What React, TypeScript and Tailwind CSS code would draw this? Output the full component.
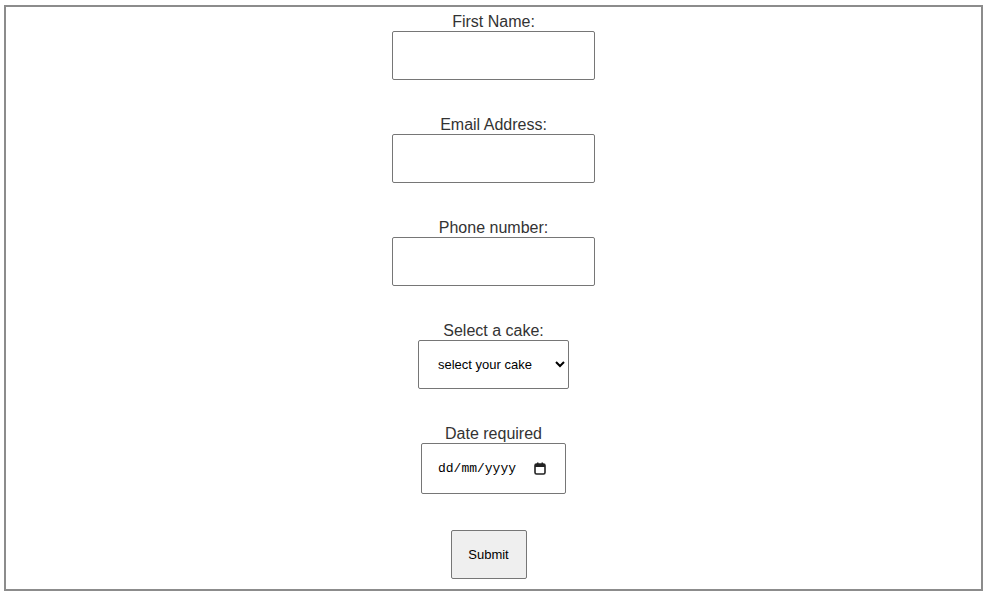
import React from 'react';

const labelCls = "block text-center text-[16px] leading-[19px] text-[#333]";
const boxCls = "block h-[49px] w-[203px] border border-[#767676] rounded-[2px] bg-white px-2 text-[13px] outline-none";

export default function App() {
    return (
        <div className="bg-white w-[989px] h-[595px] pt-[5px] pl-[4px]" style={{ fontFamily: '"Liberation Sans", Arial, sans-serif' }}>
            <form
                className="w-[979px] h-[586px] border-2 border-[#8c8c8c] flex flex-col items-center pt-[5px]"
                onSubmit={(e) => e.preventDefault()}
            >
                {/* First name */}
                <label className={labelCls}>First Name:</label>
                <input type="text" className={boxCls} />

                {/* Email */}
                <label className={labelCls + " mt-[35px]"}>Email Address:</label>
                <input type="email" className={boxCls} />

                {/* Phone */}
                <label className={labelCls + " mt-[35px]"}>Phone number:</label>
                <input type="tel" className={boxCls} />

                {/* Cake */}
                <label className={labelCls + " mt-[35px]"}>Select a cake:</label>
                <select
                    defaultValue=""
                    className="block h-[49px] w-[151px] border border-[#767676] rounded-[2px] bg-white pl-[15px] pr-1 text-[13px] text-black"
                    style={{ fontFamily: '"Liberation Sans", Arial, sans-serif' }}
                >
                    <option value="">select your cake</option>
                    <option value="chocolate">Chocolate</option>
                    <option value="vanilla">Vanilla</option>
                </select>

                {/* Date */}
                <label className={labelCls + " mt-[35px]"}>Date required</label>
                <div className="flex items-center h-[51px] w-[145px] border border-[#767676] rounded-[2px] bg-white pl-[16px] pr-[19px]">
                    <input
                        type="text"
                        placeholder="dd/mm/yyyy"
                        className="w-[88px] text-[13px] text-black placeholder:text-black outline-none bg-transparent"
                        style={{ fontFamily: '"Liberation Mono", "DejaVu Sans Mono", monospace' }}
                    />
                    <svg className="ml-auto" width="12" height="13" viewBox="0 0 12 13" fill="none">
                        <rect x="1" y="2" width="10" height="10" rx="1.5" stroke="#222" strokeWidth="1.6" />
                        <rect x="1" y="2" width="10" height="3" fill="#222" />
                        <rect x="3" y="0.5" width="1.5" height="2.5" fill="#222" />
                        <rect x="7.5" y="0.5" width="1.5" height="2.5" fill="#222" />
                    </svg>
                </div>

                <button
                    type="submit"
                    className="mt-[36px] mr-[10px] h-[49px] w-[76px] bg-[#efefef] border border-[#767676] rounded-[2px] text-[13px] text-black"
                >
                    Submit
                </button>
            </form>
        </div>
    );
}
